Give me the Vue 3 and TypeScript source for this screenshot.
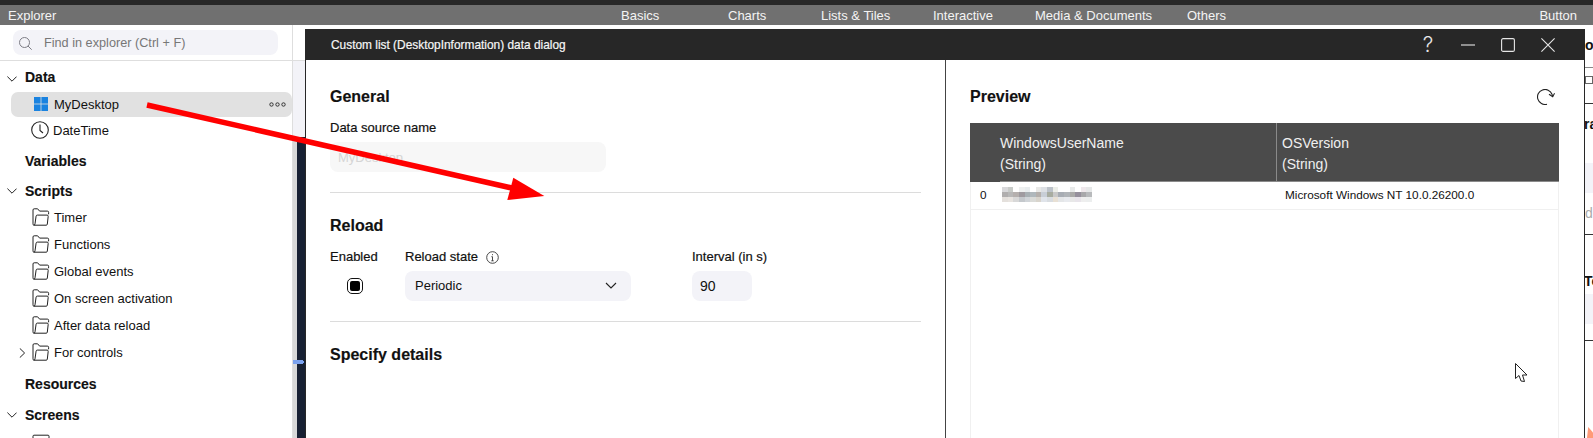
<script setup lang="ts">
const scripts: { label: string; expand?: boolean }[] = [
  { label: 'Timer' },
  { label: 'Functions' },
  { label: 'Global events' },
  { label: 'On screen activation' },
  { label: 'After data reload' },
  { label: 'For controls', expand: true },
]
const tabs = [
  { label: 'Basics', w: 107 },
  { label: 'Charts', w: 93 },
  { label: 'Lists & Tiles', w: 112 },
  { label: 'Interactive', w: 102 },
  { label: 'Media & Documents', w: 152 },
  { label: 'Others', w: 60 },
]
const mosaic: string[] = [
  '#d8d8da', '#c8cbc8', '#ffffff', '#eef0f0', '#e8ecee', '#ffffff', '#e8e8e6', '#dde0e4', '#bcc2c9', '#eceee8', '#ffffff', '#ffffff', '#e8eaea', '#ffffff', '#efe8ec', '#e6e8e8',
  '#b0aeae', '#b8b8b8', '#b5b0ae', '#9f9ba0', '#a8b0b4', '#b0b8bc', '#b5b0ac', '#c8ced6', '#a8aca0', '#c8c8c8', '#a8adb4', '#b0b4b8', '#aaaaa8', '#96909c', '#a8a8aa', '#b8babc',
  '#e4e0dc', '#e8e4e0', '#d8d8d8', '#c4c8cc', '#d0d4d8', '#dadbd8', '#d8d4cc', '#e0e4ea', '#d8dce0', '#e8e0d4', '#e4e6e8', '#e8eaee', '#e8e8e8', '#e8e4ea', '#eeeeee', '#eceeee',
]
</script>

<template>
  <div class="page">
    <div class="topbar"></div>
    <header class="menubar">
      <span class="explorer-title">Explorer</span>
      <nav class="tabs">
        <span v-for="t in tabs" :key="t.label" class="tab" :style="{ width: t.w + 'px' }">{{ t.label }}</span>
      </nav>
      <span class="button-label">Button</span>
    </header>

    <div class="body">
      <aside class="sidebar">
        <div class="search-row">
          <div class="search">
            <svg width="13" height="13" viewBox="0 0 13 13" fill="none" stroke="#7d7d85" stroke-width="1">
              <circle cx="5.500" cy="5.500" r="5" />
              <path d="M9 9 12.700 12.700" />
            </svg>
            <span>Find in explorer (Ctrl + F)</span>
          </div>
        </div>
        <div class="tree">
          <div class="head up">
            <svg class="chev" width="10" height="6" viewBox="0 0 10 6" fill="none" stroke="#222" stroke-width="1"><path d="M.4.600 5 5.200 9.600.600" /></svg>
            <b>Data</b>
          </div>
          <div class="item selected">
            <svg class="ic" width="14" height="14" viewBox="0 0 14 14" fill="#1a83e0">
              <rect x="0" y="0" width="6.600" height="6.600" /><rect x="7.400" y="0" width="6.600" height="6.600" />
              <rect x="0" y="7.400" width="6.600" height="6.600" /><rect x="7.400" y="7.400" width="6.600" height="6.600" />
            </svg>
            <span>MyDesktop</span>
            <svg class="dots" width="17" height="5" viewBox="0 0 17 5" fill="none" stroke="#333" stroke-width="1">
              <circle cx="2.500" cy="2.500" r="1.700" /><circle cx="8.500" cy="2.500" r="1.700" /><circle cx="14.500" cy="2.500" r="1.700" />
            </svg>
          </div>
          <div class="item clock">
            <svg class="ic-clock" width="18" height="18" viewBox="0 0 18 18" fill="none" stroke="#222" stroke-width="1.100">
              <circle cx="9" cy="9" r="8.300" /><path d="M9 3.500V9.500L12 12" />
            </svg>
            <span>DateTime</span>
          </div>
          <div class="head down"><b>Variables</b></div>
          <div class="head down">
            <svg class="chev" width="10" height="6" viewBox="0 0 10 6" fill="none" stroke="#222" stroke-width="1"><path d="M.4.600 5 5.200 9.600.600" /></svg>
            <b>Scripts</b>
          </div>
          <div v-for="s in scripts" :key="s.label" class="folder">
            <svg v-if="s.expand" class="exp" width="7" height="10" viewBox="0 0 7 10" fill="none" stroke="#222" stroke-width="1"><path d="M.8.400 5.600 5 .8 9.600" /></svg>
            <svg class="fic" width="18" height="18" viewBox="0 0 18 18" fill="none" stroke="#222" stroke-width="1">
              <path d="M1 15.800V2q0-1.200 1.200-1.200h3.400l2 2.300h7.800q1.200 0 1.200 1.200v2" />
              <path d="M1.800 17.200h12.400q1 0 1.100-1l.9-7.800q.1-1.300-1.100-1.300H5.300q-1 0-1.200 1L3 15.800q-.2 1.400-1.200 1.400Q1 17.200 1 15.800" />
            </svg>
            <span>{{ s.label }}</span>
          </div>
          <div class="head res"><b>Resources</b></div>
          <div class="head">
            <svg class="chev" width="10" height="6" viewBox="0 0 10 6" fill="none" stroke="#222" stroke-width="1"><path d="M.4.600 5 5.200 9.600.600" /></svg>
            <b>Screens</b>
          </div>
          <div class="folder last">
            <svg class="fic" width="18" height="18" viewBox="0 0 18 18" fill="none" stroke="#222" stroke-width="1">
              <path d="M1 16.200V2.200q0-1 1-1h14q1 0 1 1v14" />
            </svg>
            <span>Parent</span>
          </div>
        </div>
      </aside>

      <div class="gutter">
        <div class="g-top"></div>
        <div class="g-mid"></div>
        <div class="g-low"><div class="g-gray"></div><div class="g-dark"></div></div>
        <i class="handle"></i>
      </div>

      <section class="dialog">
        <div class="dialog-title">
          <span class="dt-text">Custom list (DesktopInformation) data dialog</span>
          <div class="win-btns">
            <span class="q">?</span>
            <svg width="14" height="14" viewBox="0 0 14 14" stroke="#e6e6e6" fill="none" stroke-width="1.100"><path d="M0 7H14" /></svg>
            <svg width="14" height="14" viewBox="0 0 14 14" stroke="#e6e6e6" fill="none" stroke-width="1.100"><rect x=".6" y=".6" width="12.800" height="12.800" rx="1.500" /></svg>
            <svg width="14" height="14" viewBox="0 0 14 14" stroke="#e6e6e6" fill="none" stroke-width="1.100"><path d="M.4.400 13.600 13.600M13.600.400.400 13.600" /></svg>
          </div>
        </div>
        <div class="dialog-body">
          <div class="left">
            <h3 class="h-general">General</h3>
            <label class="lbl l-ds">Data source name</label>
            <div class="ds-input">MyDesktop</div>
            <hr class="rule r1" />
            <h3 class="h-reload">Reload</h3>
            <div class="reload-row">
              <div class="col col-en">
                <label class="lbl">Enabled</label>
                <div class="cb-wrap"><span class="cb"><i></i></span></div>
              </div>
              <div class="col col-st">
                <label class="lbl">Reload state
                  <svg class="info" width="13" height="13" viewBox="0 0 13 13" fill="none" stroke="#333" stroke-width=".9">
                    <circle cx="6.500" cy="6.500" r="5.800" /><path d="M6.500 5.700V9.800M5.300 9.800H7.700M5.400 5.700H6.500" /><path d="M6.500 3.200V4.200" />
                  </svg>
                </label>
                <div class="select">
                  <span>Periodic</span>
                  <svg width="12" height="7" viewBox="0 0 12 7" fill="none" stroke="#222" stroke-width="1.100"><path d="M1 1 6 6 11 1" /></svg>
                </div>
              </div>
              <div class="col col-int">
                <label class="lbl">Interval (in s)</label>
                <div class="num">90</div>
              </div>
            </div>
            <hr class="rule r2" />
            <h3 class="h-spec">Specify details</h3>
          </div>
          <div class="right">
            <div class="preview-head">
              <h3>Preview</h3>
              <svg class="refresh" width="18" height="16" viewBox="0 0 18 16" fill="none" stroke="#222" stroke-width="1.100">
                <path d="M10 15.200A7.500 7.500 0 1 1 15 5.200L15.700 7.800" />
                <path d="M12 5.200 15.700 7.800 17.600 4.200" />
              </svg>
            </div>
            <div class="table">
              <div class="thead">
                <div class="th-idx"></div>
                <div class="th th1">WindowsUserName<br />(String)</div>
                <div class="th th2">OSVersion<br />(String)</div>
              </div>
              <div class="trow">
                <div class="td-idx">0</div>
                <div class="td1"><span class="mosaic"><i v-for="(c, i) in mosaic" :key="i" :style="{ background: c }"></i></span></div>
                <div class="td2">Microsoft Windows NT 10.0.26200.0</div>
              </div>
              <svg class="cursor" width="13" height="20" viewBox="0 0 13 20" fill="#fff" stroke="#222" stroke-width="1">
                <path d="M.5.500V15.500L4 12.500 6 18 9.500 18.500 7.500 12H12Z" />
              </svg>
            </div>
          </div>
        </div>
      </section>

      <div class="behind">
        <b class="b1">o</b>
        <i class="line l1"></i><i class="mini"></i><i class="line l2"></i>
        <b class="b2">ra</b>
        <i class="ghost-field"></i>
        <span class="di">di</span>
        <i class="line l3"></i>
        <b class="b3">To</b>
        <i class="field2"></i>
        <i class="line l4"></i>
        <i class="peach"></i>
      </div>
    </div>

    <svg class="arrow" width="560" height="210" viewBox="0 0 560 210">
      <path d="M147 105 525 191" stroke="#ff0000" stroke-width="5.500" fill="none" />
      <path d="M513.300 177.700 544.300 196 507.300 200Z" fill="#ff0000" />
    </svg>
  </div>
</template>

<style scoped>
.page { position: relative; width: 1593px; height: 438px; overflow: hidden; background: #fff; font-family: "Liberation Sans", Arial, sans-serif; color: #111; font-size: 13px; }
.topbar { height: 5px; background: #272727; }
.menubar { height: 20px; background: #707070; display: flex; align-items: center; color: #f4f4f4; font-size: 13px; }
.explorer-title { padding-left: 8px; width: 613px; flex: none; }
.tabs { display: flex; }
.tab { flex: none; }
.button-label { margin-left: auto; margin-right: 16px; padding-top: 1px; }
.body { display: flex; height: 413px; position: relative; }
.sidebar { width: 293px; flex: none; border-right: 1px solid #dedede; box-sizing: border-box; overflow: hidden; }
.search-row { border-bottom: 1px solid #dedede; padding: 5px 0 0 13px; box-sizing: border-box; height: 36px; }
.search { height: 25px; width: 265px; background: #f3f3f8; border-radius: 8px; display: flex; align-items: center; padding: 1px 0 0 6px; color: #777; gap: 12px; font-size: 12.700px; box-sizing: border-box; }
.head { height: 27px; margin-top: 3.500px; padding-left: 25px; display: flex; align-items: center; position: relative; font-size: 14px; box-sizing: border-box; }
.head b { font-weight: 700; -webkit-text-stroke: .15px currentColor; }
.up { padding-bottom: 2px; }
.down { padding-top: 2px; }
.res { margin-top: 5px; }
.chev { position: absolute; left: 7px; top: 11px; }
.item { height: 25px; margin-left: 11px; display: flex; align-items: center; padding-left: 23px; position: relative; border-radius: 7px; }
.selected { background: #e1e1e1; margin-bottom: 1px; }
.ic { margin-right: 6px; }
.dots { position: absolute; right: 6px; top: 10px; }
.ic-clock { margin-left: -3px; margin-right: 4px; }
.folder { height: 27px; padding-left: 32px; display: flex; align-items: center; gap: 4px; position: relative; box-sizing: border-box; }
.last { padding-top: 3px; }
.exp { position: absolute; left: 19px; top: 9px; }
.gutter { width: 12px; flex: none; position: relative; display: flex; flex-direction: column; }
.g-top { height: 36px; border-bottom: 1px solid #dedede; box-sizing: border-box; flex: none; }
.g-mid { height: 76px; background: #f3f3f8; flex: none; }
.g-low { flex: 1; display: flex; }
.g-gray { width: 4px; background: #d8d8d8; }
.g-dark { flex: 1; background: #172033; }
.handle { position: absolute; left: 0; top: 335px; width: 10px; height: 4px; background: #7ba2ee; box-shadow: 2px 0 0 -1px #7ba2ee; }
.dialog { width: 1280px; flex: none; margin-top: 4px; border-left: 1px solid #272727; border-right: 1px solid #272727; box-sizing: border-box; display: flex; flex-direction: column; background: #fff; z-index: 1; }
.dialog-title { height: 31px; background: #272727; color: #f6f6f6; display: flex; align-items: center; font-size: 11.900px; -webkit-text-stroke: .2px currentColor; padding-left: 25px; flex: none; }
.win-btns { margin-left: auto; display: flex; align-items: center; gap: 26px; padding-right: 29px; }
.q { font-size: 21px; width: 14px; text-align: center; color: #e6e6e6; font-family: Inter, sans-serif; font-weight: 300; -webkit-text-stroke: 0; line-height: 22px; }
.dialog-body { display: flex; flex: 1; }
.left { width: 640px; flex: none; border-right: 1px solid #444; padding-left: 24px; box-sizing: border-box; padding-right: 24px; }
.right { flex: 1; padding-left: 24px; padding-right: 25px; }
h3 { margin: 0; font-size: 16px; font-weight: 700; line-height: 18px; -webkit-text-stroke: .15px currentColor; }
.h-general { margin-top: 28px; }
.lbl { display: block; font-size: 13px; -webkit-text-stroke: .2px currentColor; line-height: 16px; white-space: nowrap; }
.l-ds { margin-top: 14px; }
.ds-input { margin-top: 6px; width: 276px; height: 30px; background: #f7f7f7; border-radius: 8px; color: #d5d5d5; line-height: 31px; padding-left: 8px; box-sizing: border-box; font-size: 13px; }
.rule { border: 0; height: 1px; background: #dcdcdc; margin: 0; }
.r1 { margin-top: 20px; }
.h-reload { margin-top: 24px; }
.reload-row { display: flex; margin-top: 14px; }
.col { flex: none; }
.col-en { width: 75px; }
.col-st { width: 287px; }
.cb-wrap { height: 30px; margin-top: 6px; display: flex; align-items: center; padding-left: 17px; }
.cb { width: 16px; height: 16px; border: 1px solid #111; border-radius: 5px; padding: 2px; display: block; box-sizing: border-box; }
.cb i { display: block; width: 100%; height: 100%; background: #000; border-radius: 2px; }
.info { vertical-align: -2.500px; margin-left: 4px; }
.select { margin-top: 6px; width: 226px; height: 30px; box-sizing: border-box; background: #f3f3f8; border-radius: 8px; display: flex; align-items: center; justify-content: space-between; padding: 0 14px 1px 10px; }
.num { margin-top: 6px; width: 60px; height: 30px; background: #f3f3f8; border-radius: 8px; line-height: 31px; padding-left: 8px; box-sizing: border-box; font-size: 14px; }
.r2 { margin-top: 20px; }
.h-spec { margin-top: 24px; }
.preview-head { display: flex; align-items: center; justify-content: space-between; height: 18px; margin-top: 28px; padding-right: 4px; }
.table { margin-top: 17px; width: 589px; height: 400px; border-left: 1px solid #f0f0f0; border-right: 1px solid #f0f0f0; box-sizing: border-box; position: relative; }
.thead { height: 59px; background: #4b4b4b; color: #f0f0f0; display: flex; font-size: 14px; line-height: 21px; margin: 0 -1px; }
.th-idx { width: 30px; flex: none; }
.th { padding-top: 10px; box-sizing: border-box; border-bottom: 1px solid #8a8a8a; flex: none; }
.th1 { width: 277px; border-right: 1px solid #8a8a8a; }
.th2 { padding-left: 5px; flex: 1; }
.trow { height: 28px; box-sizing: border-box; padding-bottom: 2px; display: flex; align-items: center; border-bottom: 1px solid #f0f0f0; font-size: 11.750px; }
.td-idx { width: 31px; padding-left: 9px; box-sizing: border-box; flex: none; }
.td1 { width: 283px; flex: none; }
.mosaic { display: grid; grid-template-columns: repeat(16, 5.625px); grid-auto-rows: 5px; width: 90px; }
.mosaic i { display: block; }
.cursor { position: absolute; left: 544px; top: 240px; }
.behind { position: absolute; left: 1585px; top: 0; width: 8px; height: 413px; overflow: hidden; font-size: 14px; line-height: 16px; }
.behind > * { position: absolute; left: 0; }
.b1 { top: 12px; }
.line { height: 1px; background: #333; width: 8px; }
.l1 { top: 42px; background: #888; }
.mini { top: 51px; width: 8px; height: 8px; border: 1px solid #666; box-sizing: border-box; }
.l2 { top: 78px; }
.b2 { top: 91px; left: -1px !important; }
.ghost-field { top: 138px; width: 8px; height: 30px; background: #f3f3f8; }
.di { top: 180px; color: #aaa; }
.l3 { top: 209px; }
.b3 { top: 248px; left: -1px !important; }
.field2 { top: 269px; width: 8px; height: 30px; background: #f3f3f8; }
.l4 { top: 315px; }
.peach { top: 402px; left: 2px !important; width: 6px; height: 11px; background: #ff9a78; clip-path: polygon(0 100%, 20% 0, 100% 50%, 100% 100%); }
.arrow { position: absolute; left: 0; top: 0; pointer-events: none; z-index: 5; }
</style>
